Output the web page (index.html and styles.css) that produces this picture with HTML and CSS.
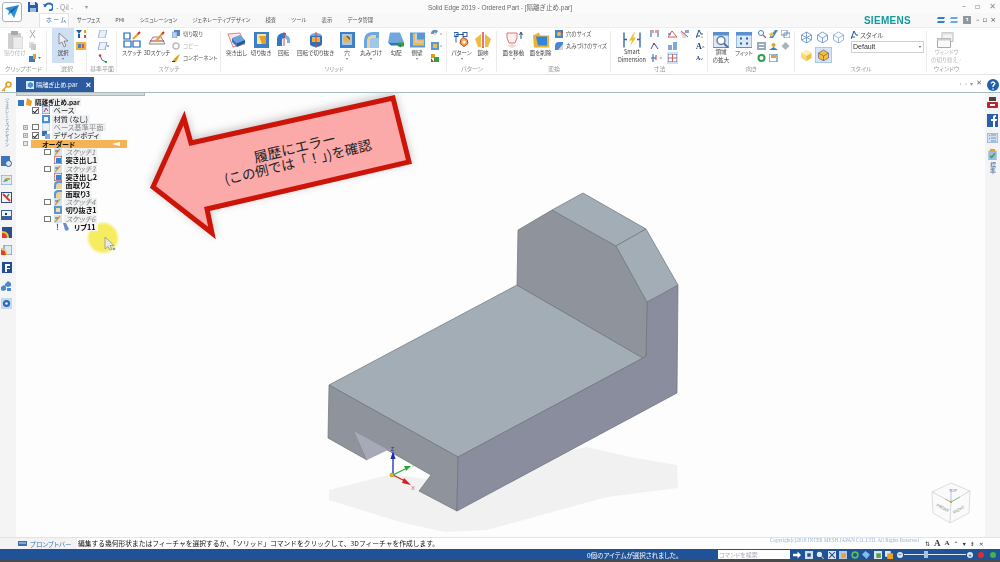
FILE: index.html
```html
<!DOCTYPE html>
<html lang="ja">
<head>
<meta charset="utf-8">
<title>Solid Edge 2019</title>
<link rel="stylesheet" href="styles.css">
</head>
<body>
<div class="app">
  <header class="head">
    <div class="logo"><svg width="18" height="18" viewBox="0 0 18 18"><path d="M2 5l14-3-5 13-3-5-3 2 1-4z" fill="#2f8fd6"/><path d="M8 10l8-8-9 6z" fill="#14589c"/></svg></div>
    <div class="titlebar">
      <div class="qat">
        <svg width="10" height="10" viewBox="0 0 10 10"><path d="M0 0h8l2 2v8H0z" fill="#2b5ea8"/><path d="M2 0h5v3H2z" fill="#dfe8f4"/><path d="M2 6h6v4H2z" fill="#9db9dd"/></svg>
        <svg class="qat-undo" width="10" height="9" viewBox="0 0 10 9"><path d="M2 5a4 3.500 0 1 1 4 3.500" fill="none" stroke="#2b6cc0" stroke-width="2"/><path d="M0 2l4 .5-2 3z" fill="#2b6cc0"/></svg>
        <span class="qat-txt">- Qil -</span>
        <span class="qat-more">▾</span>
      </div>
      <div class="title">Solid Edge 2019 - Ordered Part - [隔離ぎ止め.par]</div>
      <div class="winctl"><span>–</span><span>▫</span><span>✕</span></div>
    </div>
    <div class="tabrow">
      <nav class="tabs">
        <span class="tab active">ホーム</span><span class="tab">サーフェス</span><span class="tab">PMI</span><span class="tab">シミュレーション</span><span class="tab">ジェネレーティブデザイン</span><span class="tab">検査</span><span class="tab">ツール</span><span class="tab">表示</span><span class="tab">データ管理</span>
      </nav>
      <div class="brand">SIEMENS</div>
      <div class="brand-tools">
        <svg width="8" height="8" viewBox="0 0 8 8"><path d="M1 1h7L7 3H0zM1 5h7L7 7H0z" fill="#2f7fd0"/></svg>
        <svg width="8" height="8" viewBox="0 0 8 8"><path d="M1 1h7L7 3H0zM1 5h7L7 7H0z" fill="#69a8e0"/></svg>
        <svg width="8" height="8" viewBox="0 0 8 8"><rect width="8" height="8" fill="#8f979e"/><path d="M3 3q1-2 2 0l-1 2" fill="none" stroke="#fff"/></svg>
        <span>–</span><span>▫</span><span>×</span>
      </div>
    </div>
    <div class="ribbon">
      <section class="grp g-clip">
        <div class="body">
          <div class="tool w22 off"><svg width="15" height="18" viewBox="0 0 15 18"><rect y="2" width="13" height="16" rx="1" fill="#cfcfcf"/><rect x="3" width="7" height="4" fill="#aaa"/><rect x="5" y="6" width="10" height="12" fill="#ececec" stroke="#bbb" stroke-width=".5"/></svg><span>貼り付け</span></div>
          <div class="col c-clip">
            <div class="cell"><svg width="7" height="8" viewBox="0 0 7 8"><path d="M1 0l5 8M6 0L1 8" stroke="#a9a9a9" fill="none"/></svg></div>
            <div class="cell"><svg width="7" height="8" viewBox="0 0 7 8"><rect width="5" height="6" fill="#ddd"/><rect x="2" y="2" width="5" height="6" fill="#ccc"/></svg></div>
            <div class="cell"><svg width="12" height="8" viewBox="0 0 12 8"><rect y="2" width="6" height="6" fill="#3c7dc0"/><rect x="4" width="3" height="5" fill="#e0a030"/><path d="M9 3h3l-1.500 2z" fill="#666"/></svg></div>
          </div>
        </div>
        <div class="glabel">クリップボード</div>
      </section>
      <section class="grp g-sel">
        <div class="body">
          <div class="tool w22 hot"><svg width="10" height="14" viewBox="0 0 10 14"><path d="M1 0v11l3-2 2 5 2-1-2-5h4z" fill="#eee" stroke="#777" stroke-width=".8"/></svg><span>選択</span><i class="drop"></i></div>
          <div class="col">
            <div class="cell"><svg width="10" height="9" viewBox="0 0 10 9"><path d="M0 0l3 4 3-4z" fill="#1c5fb0"/><path d="M8 0h2v3H8z" fill="#e3a020"/><path d="M2 4h2v4H2z" fill="#1c5fb0"/><path d="M8 5h2v3H8z" fill="#d44"/></svg></div>
            <div class="cell"><svg width="10" height="8" viewBox="0 0 10 8"><rect width="10" height="8" fill="#f0b040"/><rect x="2" y="2" width="3" height="4" fill="#4a7fc0"/><rect x="6" y="2" width="2" height="4" fill="#c55"/></svg></div>
          </div>
        </div>
        <div class="glabel">選択</div>
      </section>
      <section class="grp g-base">
        <div class="body center">
          <div class="col">
            <div class="cell"><svg width="9" height="8" viewBox="0 0 9 8"><path d="M2 0h7L7 8H0z" fill="#e9eef8" stroke="#8aa4d6" stroke-width=".8"/></svg></div>
            <div class="cell"><svg width="11" height="8" viewBox="0 0 11 8"><path d="M2 0h7L7 8H0z" fill="#eef2fa" stroke="#6f8fd0" stroke-width=".8"/><path d="M9 4h2" stroke="#666"/></svg></div>
            <div class="cell"><svg width="9" height="9" viewBox="0 0 9 9"><path d="M2 1l2 5 4 2" fill="none" stroke="#3c6fb5"/><circle cx="2" cy="1.500" r="1.300" fill="#cc3a3a"/><circle cx="8" cy="8" r="1.200" fill="#2f9f4f"/></svg></div>
          </div>
        </div>
        <div class="glabel">基準平面</div>
      </section>
      <section class="grp g-sketch">
        <div class="body">
          <div class="tool w24"><svg width="18" height="16" viewBox="0 0 18 16"><path d="M1 1h6v6H1zM1 9h7v6H1zM10 9h7v6h-7z" fill="#fff" stroke="#1b62bd" stroke-width="1.200"/><path d="M10 7l6-6" stroke="#e0a030" stroke-width="2"/><path d="M15 2l2-2" stroke="#c33" stroke-width="2"/></svg><span>スケッチ</span></div>
          <div class="tool w26"><svg width="18" height="16" viewBox="0 0 18 16"><path d="M1 12l4-7h8l4 7z" fill="#f4f4f4" stroke="#8b8b8b"/><path d="M2 9h14" stroke="#c33"/><path d="M8 9l7-8" stroke="#e0a030" stroke-width="2"/><path d="M14 2l2-2" stroke="#c33" stroke-width="2"/></svg><span>3Dスケッチ</span></div>
          <div class="col c-wide">
            <div class="cell"><svg width="8" height="8" viewBox="0 0 8 8"><rect x="2" width="6" height="6" fill="#4f86cc"/><rect y="2" width="5" height="6" fill="#b8cfea" stroke="#4f86cc" stroke-width=".5"/></svg><span>切り取り</span></div>
            <div class="cell off"><svg width="8" height="8" viewBox="0 0 8 8"><circle cx="4" cy="4" r="3" fill="none" stroke="#bbb" stroke-width="1.500"/></svg><span>コピー</span></div>
            <div class="cell"><svg width="8" height="8" viewBox="0 0 8 8"><path d="M0 8h4l4-8-3 2-3 3z" fill="#e6a020"/><path d="M0 7h3v1H0z" fill="#234"/></svg><span>コンポーネント</span></div>
          </div>
        </div>
        <div class="glabel">スケッチ</div>
      </section>
      <section class="grp g-solid">
        <div class="body">
          <div class="tool w25"><svg width="21" height="16" viewBox="0 0 21 16"><path d="M2 2l12-1 5 11L7 15z" fill="#fbe9e7" stroke="#d9534f" stroke-width=".7"/><path d="M6 6l8-3 5 5-8 3z" fill="#6aa3dc"/><path d="M11 11l8-3v3l-8 4z" fill="#1c5aa8"/><path d="M6 6l5 5v4L6 10z" fill="#3a7bc4"/></svg><span>突き出し</span></div>
          <div class="tool w24"><svg width="15" height="16" viewBox="0 0 15 16"><rect width="15" height="16" fill="#3f7fc8"/><rect x="3" y="2" width="9" height="10" fill="#f4e6a0"/><path d="M5 4h7v8H8z" fill="#e6a020"/></svg><span>切り抜き</span></div>
          <div class="tool w21"><svg width="15" height="16" viewBox="0 0 15 16"><path d="M1 14V7a6 6 0 0 1 6-6h3v5H8a2 2 0 0 0-2 2v6z" fill="#2f78c8"/><path d="M9 3a5 5 0 0 1 5 5v3h-3V8L9 6z" fill="#7ab0e6"/><path d="M8 0v14" stroke="#d44" stroke-width="1"/></svg><span>回転</span></div>
          <div class="tool w43"><svg width="14" height="16" viewBox="0 0 14 16"><ellipse cx="7" cy="4" rx="6" ry="3" fill="#6ea6dc"/><rect x="1" y="4" width="12" height="8" fill="#2f70bb"/><ellipse cx="7" cy="12" rx="6" ry="3" fill="#2f70bb"/><path d="M3 5h8v5H3z" fill="#eeb23c"/><path d="M7 0v16" stroke="#d44"/></svg><span>回転で切り抜き</span></div>
          <div class="tool w20"><svg width="15" height="16" viewBox="0 0 15 16"><rect width="15" height="16" fill="#3f7fc8"/><path d="M2 2h10v11H2z" fill="#a8c7e8"/><circle cx="7" cy="7" r="3.500" fill="#eeb23c"/><path d="M6 4a3.500 3.500 0 0 1 4 4z" fill="#234f8a"/></svg><span>穴</span><i class="drop"></i></div>
          <div class="tool w28"><svg width="15" height="16" viewBox="0 0 15 16"><path d="M0 16V9q0-9 9-9h6v16z" fill="#6ba8e0"/><path d="M3 16V9q0-5 5-6h4v13z" fill="#e8d39a"/><path d="M6 16V9q0-3 3-3h6v10z" fill="#9fc6ec"/></svg><span>丸みづけ</span><i class="drop"></i></div>
          <div class="tool w22"><svg width="17" height="17" viewBox="0 0 17 17"><path d="M2 1h10l4 10H0z" fill="#70a7df"/><path d="M0 11h16l-3 3H3z" fill="#2f70bb"/><path d="M10 11h6v4h-6z" fill="#2f9f4f"/><path d="M9 13l4 3v-2h3" fill="#1f7f3f"/></svg><span>勾配</span></div>
          <div class="tool w20"><svg width="15" height="15" viewBox="0 0 15 15"><rect width="15" height="15" fill="#5d97d8"/><path d="M3 1h4v6h7v6H3z" fill="#eebc55"/><path d="M5 1h2v8h6v1H5z" fill="#bcd5ef"/></svg><span>側壁</span><i class="drop"></i></div>
          <div class="col c-solid">
            <div class="cell"><svg width="11" height="8" viewBox="0 0 11 8"><path d="M0 4a4 4 0 0 1 7-3L5 4z" fill="#6a8fb8"/><circle cx="4" cy="4" r="1.500" fill="#ddd"/><path d="M9 4h2" stroke="#999"/></svg></div>
            <div class="cell"><svg width="11" height="8" viewBox="0 0 11 8"><rect width="8" height="8" fill="#5d97d8"/><rect x="2" y="2" width="4" height="4" fill="#e8c050"/><path d="M9 4h2" stroke="#999"/></svg></div>
            <div class="cell"><svg width="11" height="8" viewBox="0 0 11 8"><rect width="4" height="4" fill="#d4a020"/><rect x="3" y="3" width="5" height="5" fill="#3a9b4a"/><path d="M0 4l3 4H0z" fill="#c33"/></svg></div>
          </div>
        </div>
        <div class="glabel">ソリッド</div>
      </section>
      <section class="grp g-pat">
        <div class="body">
          <div class="tool w23"><svg width="15" height="15" viewBox="0 0 15 15"><path d="M2 2h8M2 2v8" stroke="#2a5ea8"/><rect width="4" height="4" fill="none" stroke="#2a5ea8"/><rect x="9" width="4" height="4" fill="none" stroke="#2a5ea8"/><path d="M9 5l4 2 1 4-4 3-4-3 1-4z" fill="#f0b040" stroke="#c33"/><circle cx="10" cy="9.500" r="1.500" fill="#fff"/></svg><span>パターン</span><i class="drop"></i></div>
          <div class="tool w20"><svg width="16" height="16" viewBox="0 0 16 16"><path d="M0 7l6-5v13H3z" fill="#efbb45"/><path d="M10 2l6 5-3 8h-3z" fill="#efbb45"/><path d="M8 0v16" stroke="#d44" stroke-width="1.500"/></svg><span>鏡映</span><i class="drop"></i></div>
        </div>
        <div class="glabel">パターン</div>
      </section>
      <section class="grp g-trans">
        <div class="body">
          <div class="tool w27"><svg width="18" height="16" viewBox="0 0 18 16"><path d="M2 1h10v5l-2 5H4L2 6z" fill="#fdf0ef" stroke="#d9534f" stroke-width=".8"/><path d="M2 14l5-2 5 2-5 2z" fill="#efd7d5"/><path d="M16 7V1M14.500 3L16 0l1.500 3" stroke="#20508f" fill="none"/></svg><span>面を移動</span><i class="drop"></i></div>
          <div class="tool w27"><svg width="16" height="15" viewBox="0 0 16 15"><path d="M0 3l6-3 1 3h9v12H1z" fill="#f0b030"/><path d="M3 4h11v9H5z" fill="#2f86dc"/></svg><span>面を削除</span><i class="drop"></i></div>
          <div class="col c-trans">
            <div class="cell"><svg width="8" height="8" viewBox="0 0 8 8"><rect width="8" height="8" fill="#4c87cc"/><circle cx="4" cy="4" r="2" fill="#f0c040"/><path d="M6 0l2 3" stroke="#c33"/></svg><span>穴のサイズ</span></div>
            <div class="cell"><svg width="8" height="8" viewBox="0 0 8 8"><path d="M0 8V4q0-4 4-4h4v8z" fill="#4c87cc"/><path d="M3 8L8 2v6z" fill="#cbd9ea"/></svg><span>丸みづけのサイズ</span></div>
          </div>
        </div>
        <div class="glabel">変換</div>
      </section>
      <section class="grp g-dim">
        <div class="body">
          <div class="tool w36"><svg width="18" height="15" viewBox="0 0 18 15"><path d="M1 0v15M17 0v15M1 7h3M14 7h3" stroke="#2a5ea8" stroke-width="1.300"/><path d="M11 0L6 8h3l-2 6 6-9h-3l2-5z" fill="#f0c030"/></svg><span class="two">Smart<br>Dimension</span></div>
          <div class="col c-dim1">
            <div class="cell"><svg width="9" height="8" viewBox="0 0 9 8"><path d="M1 0v7M8 0v7" stroke="#2a5ea8"/><path d="M3 0v3M6 0v3" stroke="#d33"/></svg></div>
            <div class="cell"><svg width="9" height="8" viewBox="0 0 9 8"><path d="M1 7l3-6 4 6" stroke="#2a5ea8" fill="none"/><circle cx="4" cy="2" r="1" fill="#d33"/></svg></div>
            <div class="cell"><svg width="12" height="8" viewBox="0 0 12 8"><path d="M1 4h5M3 0v8" stroke="#2a5ea8"/><path d="M6 1v5" stroke="#d33"/><path d="M10 4h2" stroke="#888"/></svg></div>
          </div>
          <div class="col c-dim2">
            <div class="cell"><svg width="9" height="8" viewBox="0 0 9 8"><path d="M0 7l4-6 5 6z" fill="#fff" stroke="#d9534f"/><path d="M0 4h3" stroke="#2a5ea8"/></svg></div>
            <div class="cell"><svg width="9" height="8" viewBox="0 0 9 8"><path d="M0 3h4v5H0zM5 0h4v8H5z" fill="#7ea9da"/></svg></div>
            <div class="cell cell-hot"><svg width="9" height="8" viewBox="0 0 9 8"><path d="M0 0h9v8H0z" fill="#fff" stroke="#3a6fb5"/><path d="M4.500 0v8M0 4h9" stroke="#d4605a"/></svg></div>
          </div>
          <div class="col c-dim3">
            <div class="cell"><svg width="9" height="8" viewBox="0 0 9 8"><path d="M0 2h6v6H3z" fill="#cfd8e8"/><path d="M1 1l7 6" stroke="#d55"/><path d="M5 0h4v3H5z" fill="#8aa7cc"/></svg></div>
          </div>
          <div class="col c-dim4">
            <div class="cell"><svg width="7" height="8" viewBox="0 0 7 8"><path d="M0 8l3-8 2 4h2M1 6h3" stroke="#20508f" fill="none"/><path d="M5 7h2" stroke="#d9a020"/></svg></div>
            <div class="cell serif">A<em>˄</em></div>
            <div class="cell serif small">A<em>˅</em></div>
          </div>
        </div>
        <div class="glabel">寸法</div>
      </section>
      <section class="grp g-orient">
        <div class="body">
          <div class="tool w20"><svg width="16" height="15" viewBox="0 0 16 15"><rect width="16" height="15" fill="#dbe8f6" stroke="#5b90d0"/><rect width="16" height="3" fill="#5b90d0"/><circle cx="8" cy="8" r="4" fill="#fff" stroke="#5d7fa8" stroke-width="1.500"/><path d="M11 11l4 4" stroke="#5d6f8a" stroke-width="2"/></svg><span class="two">領域<br>の拡大</span></div>
          <div class="tool w22 ml2"><svg width="16" height="15" viewBox="0 0 16 15"><rect width="16" height="15" fill="#dbe8f6" stroke="#5b90d0"/><rect width="16" height="3" fill="#5b90d0"/><path d="M4 5h2v2H4zM10 5h2v2h-2zM4 10h2v2H4zM10 10h2v2h-2z" fill="#2a5ea8"/></svg><span>フィット</span></div>
          <div class="grid-o">
            <svg width="9" height="8" viewBox="0 0 9 8"><circle cx="4" cy="3" r="2.500" fill="#fff" stroke="#4a7fc0"/><path d="M6 5l3 3" stroke="#c55" stroke-width="1.300"/></svg>
            <svg width="9" height="8" viewBox="0 0 9 8"><path d="M0 8l6-8h3L4 8z" fill="#4c87cc"/><path d="M0 4l3-2 2 3-3 2z" fill="#f0c040"/></svg>
            <svg width="9" height="8" viewBox="0 0 9 8"><path d="M0 0h6v5H0zM3 3h6v5H3z" fill="#fff" stroke="#6f8fb8"/></svg>
            <svg width="9" height="8" viewBox="0 0 9 8"><rect width="9" height="8" fill="#9ab"/><path d="M2 2h5v1H2zM2 5h5v1H2z" fill="#fff"/></svg>
            <svg width="9" height="8" viewBox="0 0 9 8"><circle cx="4.500" cy="3" r="2" fill="#e8a030"/><path d="M0 8l4.500-3L9 8z" fill="#3f7fc8"/></svg>
            <svg width="9" height="8" viewBox="0 0 9 8"><path d="M4.500 0l4 4-4 4-4-4z" fill="#a9b3be"/></svg>
            <svg width="9" height="8" viewBox="0 0 9 8"><circle cx="4.500" cy="4" r="3" fill="none" stroke="#2f9f4f" stroke-width="2"/></svg>
            <svg width="9" height="8" viewBox="0 0 9 8"><rect width="8" height="8" fill="#fff" stroke="#3a6fb5"/><rect x="2" y="1" width="5" height="3" fill="#e8a030"/></svg>
          </div>
        </div>
        <div class="glabel">向き</div>
      </section>
      <section class="grp g-style">
        <div class="body">
          <div class="views">
            <div class="vrow">
              <svg width="11" height="12" viewBox="0 0 11 12"><path d="M5.500 1l5 3v5l-5 3-5-3V4zM.5 4l10 5M10.500 4l-10 5M5.500 1v11" fill="none" stroke="#5f8fc8" stroke-width=".8"/></svg>
              <svg width="11" height="12" viewBox="0 0 11 12"><path d="M5.500 1l5 3v5l-5 3-5-3V4zM.5 4l5 3 5-3M5.500 7v5" fill="#f6f9fd" stroke="#5f8fc8" stroke-width=".8"/></svg>
              <svg width="11" height="12" viewBox="0 0 11 12"><path d="M5.500 1l5 3v5l-5 3-5-3V4zM.5 4l5 3 5-3M5.500 7v5" fill="#fff" stroke="#7fa5d2" stroke-width=".8"/></svg>
            </div>
            <div class="vrow vrow2">
              <svg width="11" height="12" viewBox="0 0 11 12"><path d="M5.500 1l5 3v5l-5 3-5-3V4z" fill="#f3bd3e"/><path d="M.5 4l5 3v5l-5-3z" fill="#fbd978"/><path d="M5.500 1l5 3-5 3-5-3z" fill="#fff0bd"/></svg>
              <span class="vhot"><svg width="11" height="12" viewBox="0 0 11 12"><path d="M5.500 1l5 3v5l-5 3-5-3V4z" fill="#f3bd3e" stroke="#667" stroke-width=".7"/><path d="M5.500 7v5M.5 4l5 3 5-3" stroke="#667" stroke-width=".7" fill="none"/></svg></span>
            </div>
          </div>
          <div class="stylebox">
            <div class="cell"><svg width="7" height="8" viewBox="0 0 7 8"><path d="M0 8l3-8 2 4h2M1 6h3" stroke="#20508f" fill="none"/></svg><span>スタイル</span></div>
            <div class="select"><span>Default</span><i></i></div>
          </div>
        </div>
        <div class="glabel">スタイル</div>
      </section>
      <section class="grp g-win">
        <div class="body">
          <div class="tool w39 off"><svg width="19" height="16" viewBox="0 0 19 16"><path d="M5 .5h11v9H5z" fill="#f4f4f4" stroke="#bbb"/><path d="M5 .5h11v2H5z" fill="#ddd"/><path d="M.5 6.500h13v9H.5z" fill="#fafafa" stroke="#aaa"/><path d="M.5 6.500h13v2H.5z" fill="#ccc"/></svg><span class="two">ウィンドウ<br>の切り替え ·</span></div>
        </div>
        <div class="glabel">ウィンドウ</div>
      </section>
    </div>
  </header>

  <div class="docbar">
    <div class="doctab">
      <svg width="8" height="8" viewBox="0 0 9 9"><rect width="9" height="9" fill="#dbe8f6"/><path d="M2 3l3-2 3 2v3L5 8 2 6z" fill="#4a90d8"/></svg>
      <span>隔離ぎ止め.par</span><b>×</b>
    </div>
    <div class="docctl"><span>‹</span><span>›</span><span>▾</span><span class="docx">✕</span></div>
  </div>

  <main class="main">
    <aside class="rail-l">
      <svg class="key" width="11" height="11" viewBox="0 0 11 11"><circle cx="7.500" cy="3.500" r="2.500" fill="none" stroke="#e0a020" stroke-width="1.600"/><path d="M5.500 5.500L1 10M2 8l2 2" stroke="#e0a020" stroke-width="1.500"/></svg>
      <div class="vtext">ジェネレーティブデザイン</div>
      <div class="rail-icons">
        <svg width="11" height="11" viewBox="0 0 11 11"><rect width="9" height="10" fill="#3d77ba"/><circle cx="7.500" cy="7.500" r="3" fill="#dce8f5" stroke="#2a5ea8"/></svg>
        <svg width="11" height="10" viewBox="0 0 11 10"><rect width="11" height="10" fill="#dce8f5" stroke="#6f96c8"/><path d="M2 7l3-4 2 3z" fill="#4bab5a"/><path d="M5 3h4v2H5z" fill="#e09a40"/></svg>
        <svg width="11" height="11" viewBox="0 0 11 11"><rect width="11" height="11" fill="#2a4f90"/><rect x="1" y="1" width="9" height="9" fill="#f5f5f5"/><path d="M2 2l7 7" stroke="#d33" stroke-width="2"/><path d="M8 2L6 5" stroke="#3a9b4a" stroke-width="1.500"/></svg>
        <svg width="11" height="10" viewBox="0 0 11 10"><rect width="11" height="10" fill="#35629f"/><rect x="1" y="1" width="9" height="5" fill="#eef3f9"/><rect x="4" y="3" width="2" height="2" fill="#233"/></svg>
        <svg width="10" height="11" viewBox="0 0 10 11"><rect width="10" height="11" fill="#2a4f90"/><path d="M0 11V6q5 0 5 5z" fill="#e53b2c"/><path d="M0 6V4q7 0 7 7H5q0-5-5-5z" fill="#f2c030"/></svg>
        <svg width="11" height="10" viewBox="0 0 11 10"><rect x="3" width="8" height="10" fill="#dce8f5" stroke="#5a7fb5"/><path d="M0 10V5q5 0 5 5z" fill="#e53b2c"/><path d="M0 5V3q6 0 6 7H5q0-5-5-5z" fill="#f2c030"/></svg>
        <svg width="10" height="11" viewBox="0 0 10 11"><rect width="10" height="11" fill="#1f4d96"/><path d="M3 2h5v2H5v2h3v1H5v3H3z" fill="#fff"/></svg>
        <svg width="11" height="10" viewBox="0 0 11 10"><path d="M0 6l3-2 2 2v3l-3 1-2-1zM4 3l3-3 3 2v3l-3 1-3-1zM6 7h4v3H6z" fill="#4a8ac8"/></svg>
        <svg width="11" height="11" viewBox="0 0 11 11"><rect width="11" height="11" fill="#c5d8ee"/><circle cx="5.500" cy="5.500" r="3.600" fill="#2a6cb8"/><circle cx="5.500" cy="5.500" r="1.300" fill="#e9f1fa"/></svg>
      </div>
    </aside>

    <section class="canvas">
      <svg class="scene" viewBox="16 93 969 445" width="969" height="445">
        <polygon class="cast" points="329,490 392,474 431,480 587,447 630,457 677,465 678,488 607,497 487,530 445,532 400,522 329,500"/>
        <polygon class="f-top" points="329,385 517,285 643,358 458,457"/>
        <polygon class="f-side" points="329,385 458,457 457,511 419,491 431,475 354,431 367,460 328,438"/>
        <polygon class="f-in" points="354,431 367,460 390,449 392,452"/>
        <polygon class="f-right" points="458,457 643,358 646,356 647,302 678,285 677,393 457,511"/>
        <polygon class="f-side" points="518,230 552,210 616,246 647,302 646,356 643,358 517,285"/>
        <polygon class="f-top" points="552,210 583,193 646,229 616,246"/>
        <polygon class="f-top" points="616,246 646,229 678,285 647,302"/>

        <g class="triad">
          <path class="ax-z" d="M393 475V458"/><polygon class="hz" points="390.500,459 395.500,459 393,451"/>
          <path class="ax-y" d="M393 475L405 469"/><polygon class="hy" points="404,466 406,471 411,466"/>
          <path class="ax-x" d="M393 475L405 481"/><polygon class="hx" points="404,478 402,483 411,485"/>
          <circle class="orig" cx="392" cy="475" r="2"/>
          <text class="tz" x="390.500" y="451">Z</text><text class="ty" x="411" y="467">Y</text><text class="tx" x="411" y="490">X</text>
        </g>

        <g class="cube">
          <polygon points="951,483 970,491 951,502 932,492"/>
          <polygon points="932,492 951,502 950,523 933,513"/>
          <polygon points="970,491 951,502 950,523 969,513"/>
          <path class="ca-z" d="M951 502V489"/><path class="ca-g" d="M951 502l9-5"/><path class="ca-r" d="M951 502l-6-3"/><circle class="ca-o" cx="951" cy="502" r="1"/>
          <text class="ct" transform="translate(936,506) rotate(28)">FRONT</text>
          <text class="ct" transform="translate(954,514) rotate(-30)">RIGHT</text>
          <text class="ct" x="949" y="492">TOP</text>
        </g>

        <g class="arrow">
          <polygon points="153,187 184,118 191,143 393,98 409,162 207,209 212,233"/>
        </g>
        <text class="a-text a1" transform="translate(296,153) rotate(-13.500)">履歴にエラー</text>
        <text class="a-text" transform="translate(299,167) rotate(-13.500)">(この例では「！」)を確認</text>

        <circle class="halo" cx="103" cy="238" r="15"/>
        <path class="mouse" d="M105 237v12l3-2.500 2 3.500 2-1-2-3.500h4z"/>
        <circle class="mouse-dot" cx="114" cy="249" r="1.300"/>
      </svg>

      <div class="grip"></div>
      <div class="tree">
        <div class="row r0"><svg class="ti" width="15" height="8" viewBox="0 0 15 8"><path d="M0 2h6v6H0z" fill="#2f78c8"/><path d="M9 0l5 3-1 5-5-1z" fill="#e8a030"/></svg><span class="lab strong root">隔離ぎ止め.par</span></div>
        <div class="row r1"><i class="exp none"></i><i class="cb on"></i><svg class="ti" width="8" height="8" viewBox="0 0 8 8"><rect width="8" height="8" fill="#dce8f5" stroke="#4a7fc0"/><path d="M2 6l2-4 2 3" stroke="#c33" fill="none"/></svg><span class="lab">ベース</span></div>
        <div class="row r1"><i class="exp none"></i><i class="cb none"></i><svg class="ti" width="8" height="8" viewBox="0 0 8 8"><rect width="8" height="8" fill="#4a90d8"/><rect x="2" y="2" width="4" height="4" fill="#f4f4f4"/></svg><span class="lab">材質 (なし)</span></div>
        <div class="row r1"><i class="exp plus"></i><i class="cb"></i><svg class="ti" width="8" height="8" viewBox="0 0 8 8"><rect width="8" height="8" fill="#eef2f7" stroke="#a9bdd6"/></svg><span class="lab dim">ベース基準平面</span></div>
        <div class="row r1"><i class="exp plus"></i><i class="cb on"></i><svg class="ti" width="8" height="8" viewBox="0 0 8 8"><rect width="5" height="5" fill="#3a6fb5"/><rect x="3" y="3" width="5" height="5" fill="#86aedc"/></svg><span class="lab">デザインボディ</span></div>
        <div class="row r-ord"><i class="exp minus"></i><div class="ordbar"><span>オーダード</span><i class="ord-tri"></i></div></div>
        <div class="row r2"><i class="cb"></i><svg class="ti" width="8" height="8" viewBox="0 0 8 8" ><rect width="8" height="8" fill="#d4e2f2"/><path d="M1 7l5-6" stroke="#e0a020" stroke-width="1.500"/><path d="M1 3h3" stroke="#2a5ea8"/></svg><span class="lab sk">スケッチ1</span></div>
        <div class="row r2"><i class="cb none"></i><svg class="ti" width="8" height="8" viewBox="0 0 8 8"><rect width="8" height="8" fill="#e8eef6" stroke="#a33"/><rect x="2" y="2" width="5" height="5" fill="#3a7fc8"/></svg><span class="lab strong">突き出し1</span></div>
        <div class="row r2"><i class="cb"></i><svg class="ti" width="8" height="8" viewBox="0 0 8 8"><rect width="8" height="8" fill="#d4e2f2"/><path d="M1 7l5-6" stroke="#e0a020" stroke-width="1.500"/><path d="M1 3h3" stroke="#2a5ea8"/></svg><span class="lab sk">スケッチ3</span></div>
        <div class="row r2"><i class="cb none"></i><svg class="ti" width="8" height="8" viewBox="0 0 8 8"><rect width="8" height="8" fill="#e8eef6" stroke="#a33"/><rect x="2" y="2" width="5" height="5" fill="#3a7fc8"/></svg><span class="lab strong">突き出し2</span></div>
        <div class="row r2"><i class="cb none"></i><svg class="ti" width="8" height="8" viewBox="0 0 8 8"><path d="M0 8V4q0-4 4-4h4v8z" fill="#5a97d8"/><path d="M2 8V5q0-3 3-3h3v6z" fill="#e8d39a"/></svg><span class="lab strong">面取り2</span></div>
        <div class="row r2"><i class="cb none"></i><svg class="ti" width="8" height="8" viewBox="0 0 8 8"><path d="M0 8V4q0-4 4-4h4v8z" fill="#5a97d8"/><path d="M2 8V5q0-3 3-3h3v6z" fill="#e8d39a"/></svg><span class="lab strong">面取り3</span></div>
        <div class="row r2"><i class="cb"></i><svg class="ti" width="8" height="8" viewBox="0 0 8 8"><rect width="8" height="8" fill="#d4e2f2"/><path d="M1 7l5-6" stroke="#e0a020" stroke-width="1.500"/><path d="M1 3h3" stroke="#2a5ea8"/></svg><span class="lab sk">スケッチ4</span></div>
        <div class="row r2"><i class="cb none"></i><svg class="ti" width="8" height="8" viewBox="0 0 8 8"><rect width="8" height="8" fill="#5a97d8"/><rect x="2" y="2" width="4" height="4" fill="#f0dfa6"/></svg><span class="lab strong">切り抜き1</span></div>
        <div class="row r2"><i class="cb"></i><svg class="ti" width="8" height="8" viewBox="0 0 8 8"><rect width="8" height="8" fill="#d4e2f2"/><path d="M1 7l5-6" stroke="#e0a020" stroke-width="1.500"/><path d="M1 3h3" stroke="#2a5ea8"/></svg><span class="lab sk">スケッチ6</span></div>
        <div class="row r2 r-err"><span class="bang">!</span><svg class="ti ti-rib" width="8" height="8" viewBox="0 0 8 8"><path d="M1 0h3l3 6-2 2-2-1z" fill="#5a97d8"/><path d="M3 1l1 6" stroke="#d66" /></svg><span class="lab strong">リブ11</span></div>
      </div>
    </section>

    <aside class="rail-r">
      <svg class="help" width="12" height="12" viewBox="0 0 12 12"><circle cx="6" cy="6" r="6" fill="#1f5fb0"/><path d="M4 4.500q2-3 4 0L6 7v1" fill="none" stroke="#fff" stroke-width="1.300"/><circle cx="6" cy="10" r=".8" fill="#fff"/></svg>
      <svg width="11" height="11" viewBox="0 0 11 11"><rect y="5" width="11" height="6" rx="1" fill="#b8252f"/><rect x="2" width="7" height="4" fill="#444"/><rect x="3" y="7" width="5" height="2" fill="#fff"/></svg>
      <svg width="11" height="13" viewBox="0 0 11 13"><rect width="11" height="13" fill="#2a5fae"/><path d="M6 13V7H4V5h2V3q0-2 3-2v2H8v2h2l-.5 2H8v6z" fill="#fff"/></svg>
      <svg width="11" height="10" viewBox="0 0 11 10"><rect width="11" height="10" fill="#cfdff0" stroke="#7f9fc8"/><path d="M2 2h1v1H2zM2 5h1v1H2z" fill="#d88a20"/><path d="M4 2h5M4 5h5M4 8h5" stroke="#5578a8" stroke-width=".7"/></svg>
      <svg width="9" height="11" viewBox="0 0 10 13"><rect y="2" width="10" height="11" fill="#9cbde0"/><rect x="2" width="6" height="3" fill="#e8a030"/><path d="M2 8l2 2 4-5" stroke="#2f9f4f" stroke-width="1.500" fill="none"/></svg>
      <div class="vtext-r">標準</div>
    </aside>
  </main>

  <div class="prompt">
    <svg class="pr-ico" width="9" height="5" viewBox="0 0 9 5"><rect width="9" height="5" fill="#3a6fb5"/><path d="M1 2h7" stroke="#cfe0f4"/></svg>
    <span class="pr-label">プロンプトバー</span>
    <div class="pr-input">
      <span>編集する幾何形状またはフィーチャを選択するか、「ソリッド」コマンドをクリックして、3Dフィーチャを作成します。</span>
      <small class="copy">Copyright(c)2018 INTER MESH JAPAN CO.,LTD. All Rights Reserved</small>
      <div class="pr-tools"><span>⇅</span><b class="big-a">A</b><b class="mid-a">A</b><span>⌃</span><span>▾</span><span>⇟</span><span>×</span></div>
    </div>
  </div>

  <div class="status">
    <span class="st-msg">0個のアイテムが選択されました。</span>
    <div class="st-search">コマンドを検索</div>
    <div class="st-tools">
      <svg viewBox="0 0 7 6"><path d="M0 2h4V0l3 3-3 3V4H0z" fill="#fff"/></svg>
      <svg viewBox="0 0 7 7"><rect width="7" height="7" fill="#cfe0f4"/><rect x="2" y="2" width="3" height="3" fill="#28518c"/></svg>
      <svg viewBox="0 0 7 7"><circle cx="3" cy="3" r="2.300" fill="#dce8f5"/><path d="M4.500 4.500L7 7" stroke="#e7a040"/></svg>
      <svg viewBox="0 0 7 7"><rect width="7" height="7" fill="#dce8f5"/><path d="M1 1l5 5M6 1L1 6" stroke="#28518c"/></svg>
      <svg viewBox="0 0 7 7"><rect width="7" height="7" fill="#b7c9dd"/><rect x="2" y="2" width="4" height="4" fill="#e7a040"/></svg>
      <svg viewBox="0 0 7 7"><circle cx="3.500" cy="3.500" r="2.500" fill="none" stroke="#55c060" stroke-width="1.500"/></svg>
      <svg viewBox="0 0 7 7"><path d="M0 3l3-3 4 3-3 4z" fill="#7fbcf0"/></svg>
      <svg viewBox="0 0 7 7"><rect width="7" height="7" fill="#dce8f5"/><rect x="2" y="2" width="4" height="4" fill="#5a9e40"/></svg>
      <svg viewBox="0 0 7 7"><rect width="5" height="5" fill="#dce8f5"/><rect x="2" y="2" width="5" height="5" fill="#f0a020"/></svg>
    </div>
    <div class="slider"><i class="s-btn">−</i><div class="s-track"><i class="s-knob"></i></div><i class="s-btn">+</i></div>
    <i class="led red"></i><i class="led green"></i>
  </div>
  <div class="foot"></div>
</div>
</body>
</html>
```

FILE: styles.css
```css
* { box-sizing: border-box; }
html, body { margin: 0; padding: 0; background: #fff; }
body { width: 1000px; height: 562px; overflow: hidden; font-family: "Noto Sans CJK JP", "Liberation Sans", sans-serif; font-feature-settings: "palt"; }
.app { width: 1000px; height: 562px; display: flex; flex-direction: column; position: relative; color: #444; }
svg { display: block; flex: none; }
.head, .docbar, .rail-l, .rail-r, .tree, .prompt, .status { filter: blur(.4px); }

/* header */
.head { height: 75px; flex: none; position: relative; background: #fbfbfb; }
.logo { position: absolute; left: 2px; top: 2px; width: 20px; height: 20px; border: 1px solid #aab4be; border-radius: 3px; background: #fff; }
.titlebar { height: 13px; display: flex; align-items: center; }
.qat { width: 140px; padding-left: 28px; display: flex; align-items: center; font-size: 6px; color: #999; }
.qat-undo { margin-left: 5px; }
.qat-txt { margin-left: 3px; font-size: 7px; }
.qat-more { margin-left: 12px; }
.title { flex: 1; text-align: center; font: 6.500px "Liberation Sans", "Noto Sans CJK JP", sans-serif; color: #666; }
.winctl { width: 140px; display: flex; justify-content: flex-end; gap: 9px; padding-right: 4px; font: 8px "DejaVu Sans", sans-serif; color: #888; }
.tabrow { height: 14px; display: flex; align-items: center; background: #f8f8f8; }
.tabs { display: flex; margin-left: 39px; height: 14px; align-items: stretch; }
.tab { padding: 1px 7.500px 0; font-size: 5.400px; line-height: 12px; color: #555; white-space: nowrap; }
.tab.active { width: 30px; background: #fff; border: 1px solid #e3e3e3; border-bottom: 0; padding: 0 0 0 6px; color: #3d6aa3; font-size: 6px; letter-spacing: 1.400px; }
.brand { margin-left: auto; font: bold 10px "Liberation Sans", sans-serif; color: #129a9c; letter-spacing: .3px; }
.brand-tools { width: 89px; display: flex; justify-content: flex-end; align-items: center; gap: 3px; padding-right: 4px; font: 7px "DejaVu Sans", sans-serif; color: #555; }
.brand-tools svg { margin-right: 2px; }

/* ribbon */
.ribbon { height: 48px; display: flex; background: #fff; border-top: 1px solid #eee; border-bottom: 1px solid #e5e5e5; }
.grp { display: flex; flex-direction: column; position: relative; flex: none; }
.grp::after { content: ""; position: absolute; right: 0; top: 3px; bottom: 2px; width: 1px; background: #ececec; }
.body { height: 35px; display: flex; align-items: flex-start; padding-left: 3px; }
.body.center { justify-content: center; padding: 0; }
.glabel { height: 11px; line-height: 11px; text-align: center; font-size: 6px; color: #9a9a9a; white-space: nowrap; }
.g-clip { width: 47px; } .g-sel { width: 40px; } .g-base { width: 30px; } .g-sketch { width: 104px; }
.g-solid { width: 226px; } .g-pat { width: 50px; } .g-trans { width: 114px; } .g-dim { width: 97px; }
.g-orient { width: 87px; } .g-style { width: 132px; } .g-win { width: 39px; }
.g-win .body { padding-left: 0; }
.g-win::after { display: none; }
.tool { display: flex; flex-direction: column; align-items: center; height: 35px; padding-top: 3px; font-size: 5.600px; color: #444; white-space: nowrap; flex: none; }
.tool svg { height: 18px; }
.tool span { display: block; line-height: 8px; text-align: center; }
.tool .two { line-height: 7.500px; }
.w20 { width: 20px; } .w21 { width: 21px; } .w22 { width: 22px; } .w23 { width: 23px; } .w24 { width: 24px; } .w25 { width: 25px; } .w26 { width: 26px; } .w27 { width: 27px; } .w28 { width: 28px; } .w36 { width: 36px; } .w39 { width: 39px; } .w43 { width: 43px; }
.ml2 { margin-left: 2px; }
.tool.off, .cell.off { color: #b5b5b5; }
.tool.hot { background: #cfe0f5; }
.g-clip .body { padding-left: 4px; }
.g-sel .body { padding-left: 5px; }
.drop { display: block; width: 0; height: 0; margin-top: 1px; border: 1.500px solid transparent; border-top: 2px solid #777; border-bottom: 0; }
.col { display: flex; flex-direction: column; margin-left: 2px; }
.cell { height: 12px; display: flex; align-items: center; gap: 3px; font-size: 5.400px; color: #555; white-space: nowrap; }
.c-clip { margin-left: 3px; }
.c-wide { margin-left: 2px; }
.c-solid { margin-left: 4px; }
.c-trans { margin-left: 1px; }
.c-dim1 { margin-left: 0; }
.c-dim2 { margin-left: 6px; }
.c-dim3 { margin-left: 3px; }
.c-dim4 { margin-left: 7px; }
.cell-hot { background: #cfe0f5; margin: 0 -1px; padding: 0 1px; }
.serif { font: bold 8px "Liberation Serif", serif; color: #1b3c6e; gap: 0; }
.serif.small { font-size: 6px; }
.serif em { font-size: 5px; color: #333; }
.grid-o { display: grid; grid-template-columns: repeat(3, 9px); grid-auto-rows: 12px; column-gap: 3px; margin-left: 2px; align-items: center; }
.views { width: 50px; margin-left: 3px; padding-top: 2px; }
.vrow { display: flex; gap: 5px; height: 14px; align-items: center; }
.vrow2 { margin-top: 3px; height: 16px; gap: 3px; }
.vhot { display: flex; align-items: center; justify-content: center; width: 17px; height: 16px; background: #d5e5f7; border: 1px solid #a9c8ea; }
.stylebox { margin-left: 0; padding-top: 1px; }
.stylebox .cell { font-size: 6.500px; gap: 2px; }
.select { width: 73px; height: 12px; border: 1px solid #cfcfcf; background: #fff; font: 7px/10px "Liberation Sans", sans-serif; color: #333; padding-left: 1px; display: flex; justify-content: space-between; align-items: center; }
.select i { margin-right: 2px; border: 1.500px solid transparent; border-top: 2px solid #555; border-bottom: 0; }

/* doc tab bar */
.docbar { height: 18px; flex: none; display: flex; align-items: flex-start; justify-content: space-between; padding: 2px 18px 0 16px; background: #fff; border-bottom: 1px solid #a7bdc6; }
.doctab { width: 78px; height: 15px; background: #2b5a9e; color: #fff; display: flex; align-items: center; padding: 0 3px 0 10px; gap: 2px; font-size: 6.200px; }
.doctab b { margin-left: auto; font: bold 9px "Liberation Sans", sans-serif; }
.docctl { display: flex; gap: 3px; align-items: center; font: 6px "DejaVu Sans", sans-serif; color: #999; padding-top: 2px; }
.docx { font-size: 7px; color: #666; }

/* main */
.main { flex: 1; display: flex; min-height: 0; }
.rail-l { width: 16px; flex: none; background: #f4f4f4; display: flex; flex-direction: column; align-items: flex-start; padding-left: 1px; }
.key { margin-top: -12px; }
.vtext { writing-mode: vertical-rl; font-size: 4.500px; font-feature-settings: "vpal"; line-height: 8px; color: #5d7da6; margin: 5px 0 0 2px; height: 48px; white-space: nowrap; }
.rail-icons { display: grid; grid-auto-rows: 17.700px; justify-items: center; align-items: center; width: 11px; margin-top: 8px; }
.rail-r { width: 15px; flex: none; background: #f4f4f4; display: flex; flex-direction: column; align-items: center; gap: 6px; position: relative; }
.help { margin-top: -14px; }
.vtext-r { writing-mode: vertical-rl; font-size: 6px; color: #3f6aa5; line-height: 8px; margin-top: -4px; }
.canvas { flex: 1; position: relative; background: #fdfdfd; min-width: 0; overflow: hidden; }
.scene { position: absolute; left: 0; top: 0; }
.cast { fill: #f1f1f1; }
.f-top { fill: #a3adb5; stroke: #6d747c; stroke-width: .7; stroke-linejoin: round; }
.f-side { fill: #8f939c; stroke: #6d727b; stroke-width: .7; stroke-linejoin: round; }
.f-in { fill: #a7a9b7; }
.f-right { fill: #898d9e; stroke: #6d727b; stroke-width: .7; stroke-linejoin: round; }
.triad path { stroke-width: 1.300; fill: none; }
.ax-z { stroke: #1c2bb0; } .hz { fill: #1c2bb0; }
.ax-y { stroke: #2aa83a; } .hy { fill: #2aa83a; }
.ax-x { stroke: #d81f1f; } .hx { fill: #d81f1f; }
.orig { fill: #d8c020; stroke: #8a7a10; stroke-width: .5; }
.triad text { font: 6px "Liberation Sans", sans-serif; }
.tz { fill: #2030a0; } .ty { fill: #66c070; } .tx { fill: #e06060; }
.cube polygon { fill: #fafafa; stroke: #d5d5d5; stroke-width: .8; }
.cube path { stroke-width: .8; fill: none; }
.ca-z { stroke: #a9a9e0; } .ca-g { stroke: #70c080; } .ca-r { stroke: #d9a070; }
.ca-o { fill: #c5a020; }
.ct { font: 4px "Liberation Sans", sans-serif; fill: #777; }
.arrow polygon { fill: #fba9a9; stroke: #cc1408; stroke-width: 5px; stroke-linejoin: miter; stroke-miterlimit: 12; filter: drop-shadow(0 -2px 4px rgba(0,0,0,.22)); }
.a-text { font-size: 13.500px; font-feature-settings: normal; fill: #222; text-anchor: middle; font-family: "Noto Sans CJK JP", sans-serif; }
.a1 { font-size: 14px; }
.halo { fill: #f6ec60; filter: blur(1px); }
.mouse { fill: #e8e8e8; stroke: #8a8a8a; stroke-width: .7; }
.mouse-dot { fill: #6aa6dc; }

/* tree */
.grip { position: relative; width: 129px; height: 4px; margin-top: -1px; background: #d8d8d8; border: 1px solid #b5b5b5; }
.tree { position: relative; padding-top: 2px; display: flex; flex-direction: column; width: 130px; }
.row { height: 8.330px; display: flex; align-items: center; white-space: nowrap; }
.r0 { padding-left: 2px; }
.r1 { padding-left: 7px; }
.r-ord { padding-left: 7px; }
.r2 { padding-left: 28px; }
.exp { width: 5px; height: 5px; flex: none; border: 1px solid #aaa; background: #ddd; }
.exp.none { visibility: hidden; }
.exp.minus { background: #e6e6e6; }
.exp.plus { background: #888; box-shadow: inset 0 0 0 1px #ddd; }
.cb { width: 6.500px; height: 6.500px; flex: none; border: 1px solid #777; background: #fff; margin-left: 4px; position: relative; }
.r2 .cb { margin-left: 0; }
.cb.none { visibility: hidden; }
.cb.on::after { content: ""; position: absolute; left: 1px; top: 0; width: 2px; height: 3.500px; border: solid #223; border-width: 0 1px 1px 0; transform: rotate(40deg); }
.ti { margin-left: 3px; }
.r0 .ti { margin-left: 0; }
.lab { margin-left: 2px; padding: 0 2px; background: #eef0f2; font-size: 7.300px; line-height: 8px; color: #222; }
.lab.dim { color: #8a8a8a; }
.lab.sk { color: #888; font-style: italic; }
.lab.strong { font-weight: 700; color: #111; background: #f6f6f6; }
.lab.root { background: #eee; font-size: 6.500px; margin-left: 1px; padding: 0 1px; }
.ordbar { margin-left: 3px; width: 96px; height: 8px; line-height: 8px; background: #f6b354; display: flex; align-items: center; justify-content: space-between; padding: 0 7px 0 11px; font-weight: 700; font-size: 7px; color: #111; }
.ord-tri { width: 0; height: 0; border: solid transparent; border-width: 2.500px 8px 2.500px 0; border-right-color: #fff; }
.r-err { padding-left: 39px; }
.bang { width: 5px; color: #d41e1e; font-weight: 700; font-size: 8px; line-height: 8px; text-align: center; }
.ti-rib { margin-left: 2px; }

/* prompt and status */
.prompt { height: 12px; flex: none; display: flex; align-items: center; background: #f3f3f3; padding-left: 18px; border-top: 1px solid #e4e4e4; }
.pr-label { margin-left: 3px; width: 47px; font-size: 6.500px; color: #3d6fb8; white-space: nowrap; }
.pr-input { flex: 1; height: 11px; background: #fff; position: relative; font-size: 6.750px; font-feature-settings: normal; line-height: 11px; color: #111; padding-left: 1px; white-space: nowrap; }
.copy { position: absolute; left: 693px; top: -1px; font: 5.100px/7px "Liberation Serif", serif; color: #9ab2d6; }
.pr-tools { position: absolute; left: 848px; top: 0; display: flex; align-items: center; gap: 4px; height: 10px; font: 6px "DejaVu Sans", sans-serif; color: #333; }
.big-a { font: bold 9px "Liberation Serif", serif; }
.mid-a { font: bold 7px "Liberation Serif", serif; }
.status { height: 11px; flex: none; display: flex; align-items: center; background: #1f5296; color: #fff; font-size: 6.500px; }
.st-msg { margin-left: 587px; width: 131px; white-space: nowrap; }
.st-search { width: 72px; height: 9px; background: #fff; color: #aab; font-size: 6px; line-height: 9px; padding-left: 1px; }
.st-tools { display: flex; align-items: center; gap: 3.500px; margin-left: 3px; width: 104px; }
.st-tools svg { width: 8px; height: 8px; }
.slider { display: flex; align-items: center; width: 76px; }
.s-btn { width: 6px; height: 6px; border-radius: 50%; background: #dfe8f3; color: #1f5296; font: bold 6px/6px "Liberation Sans", sans-serif; text-align: center; flex: none; }
.s-track { flex: 1; height: 1px; background: #dfe8f3; position: relative; margin: 0 1px; }
.s-knob { position: absolute; left: 20px; top: -3px; width: 4px; height: 7px; background: #a9c3e0; }
.led { width: 6px; height: 6px; border-radius: 50%; flex: none; }
.red { background: #e52a2a; margin-left: 5px; }
.green { background: #3fb54a; margin-left: 6px; }
.foot { height: 2px; flex: none; background: #4a4a4a; }
```
